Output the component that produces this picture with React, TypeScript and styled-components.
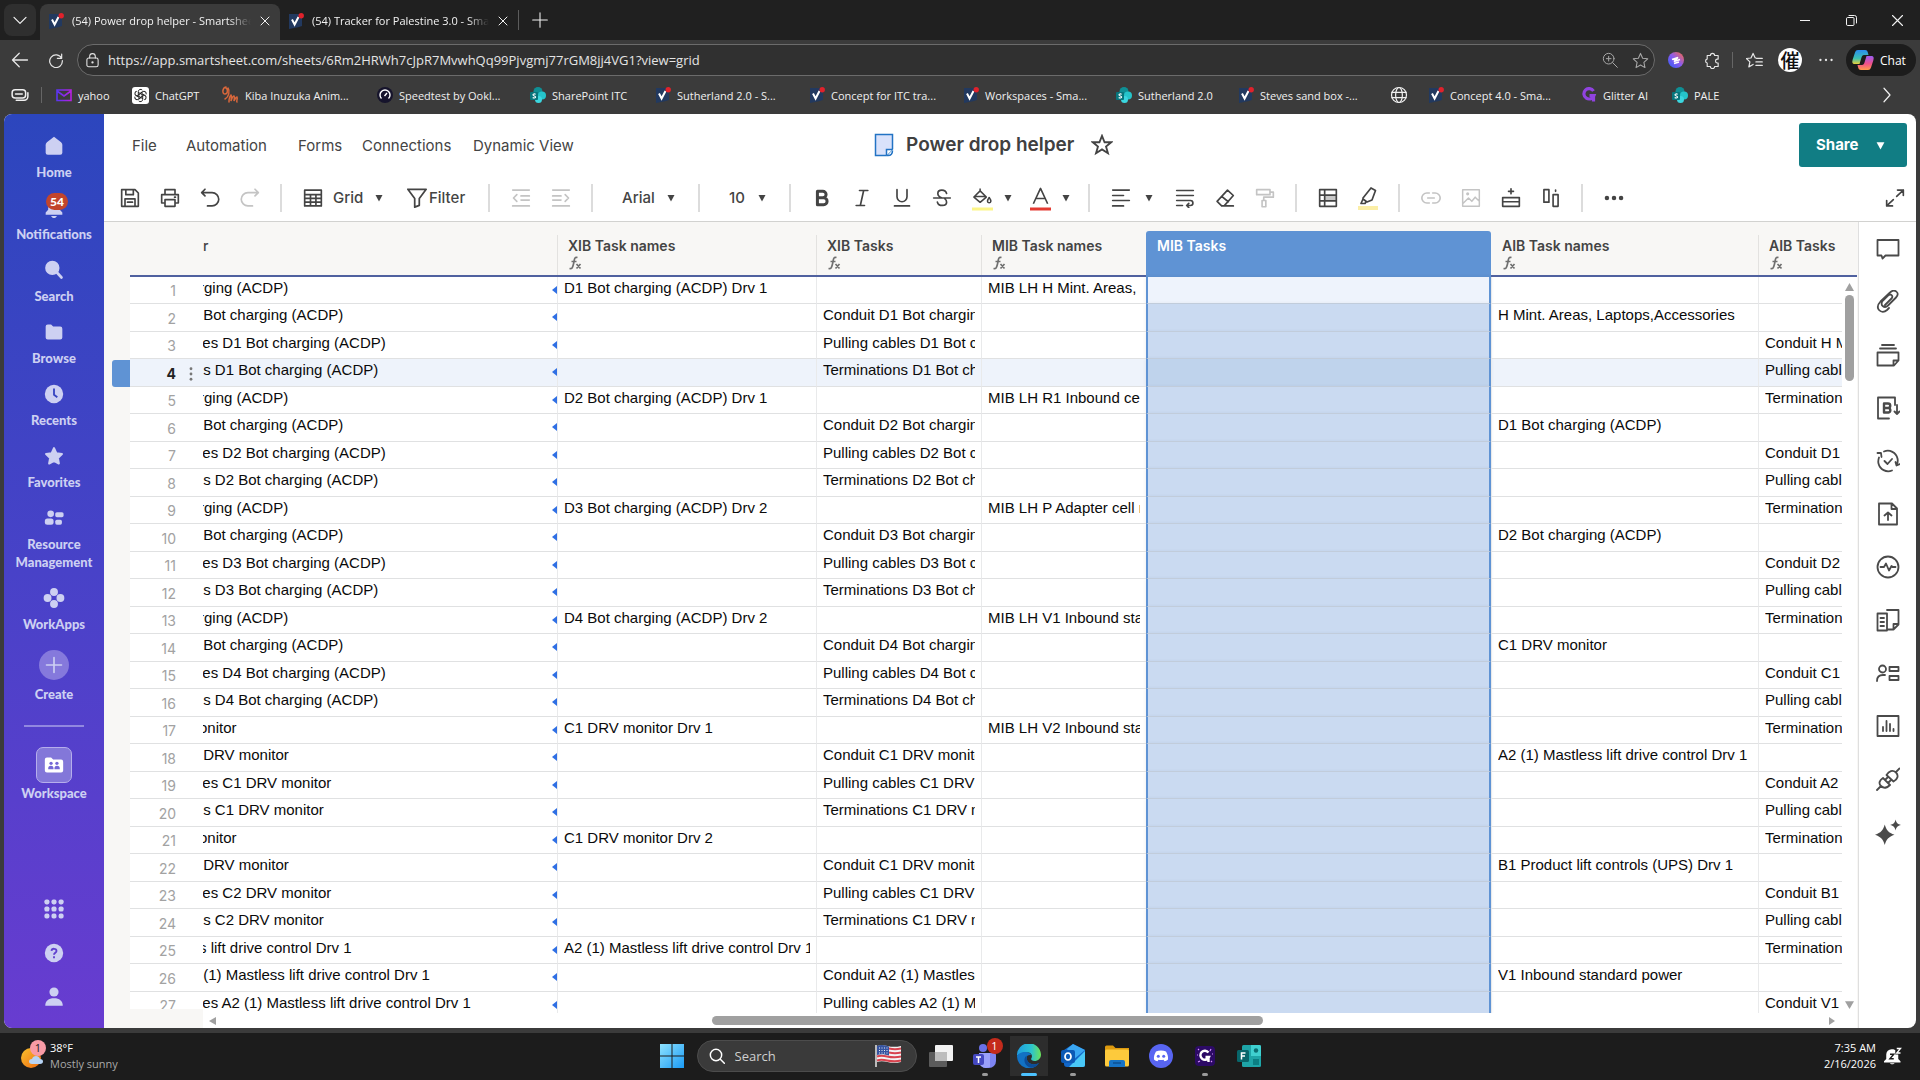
import React from "react";
import styled, { createGlobalStyle, css } from "styled-components";

const ui = `"Open Sans", "Noto Sans", sans-serif`;
const inter = `Inter, "Liberation Sans", sans-serif`;
const arial = `"Liberation Sans", Arial, sans-serif`;

const Global = createGlobalStyle`
  * { box-sizing: border-box; }
  body { margin: 0; background: #3b3b3b; overflow: hidden; }
  button, input, select { font: inherit; color: inherit; border: 0; background: none; padding: 0; margin: 0; outline: 0; }
  a { color: inherit; text-decoration: none; }
  svg { display: block; flex: none; }
`;

/* ---------- icons ---------- */

type IconProps = { size?: number; w?: number; children: React.ReactNode; color?: string; box?: string };

const Line = ({ size = 20, w = 2, color = "currentColor", box = "0 0 24 24", children }: IconProps) => (
  <svg width={size} height={size} viewBox={box} fill="none" stroke={color} strokeWidth={w} strokeLinejoin="round" strokeLinecap="round" aria-hidden="true">
    {children}
  </svg>
);

const Solid = ({ size = 20, color = "currentColor", box = "0 0 24 24", children }: IconProps) => (
  <svg width={size} height={size} viewBox={box} fill={color} aria-hidden="true">
    {children}
  </svg>
);

const Caret = ({ size = 8 }: { size?: number }) => (
  <Solid size={size} box="0 0 8 8"><path d="M0.5 1h7L4 7.5z" /></Solid>
);

const SmartIcon = () => (
  <svg width="16" height="16" viewBox="0 0 16 16" aria-hidden="true">
    <path d="M1 1h13v12l-4 1.2L1 16z" fill="#22395f" />
    <path d="M4 6.5l2.6 5L10.500 4" fill="none" stroke="#fff" strokeWidth="2" />
    <circle cx="13.200" cy="2.800" r="2.700" fill="#e0222b" />
  </svg>
);

const SharePointIcon = () => (
  <svg width="16" height="16" viewBox="0 0 16 16" aria-hidden="true">
    <circle cx="8" cy="4.500" r="4.500" fill="#0f8f95" />
    <circle cx="12" cy="8.500" r="4" fill="#25c4ca" />
    <circle cx="8.500" cy="12.500" r="3.500" fill="#3bd6df" />
    <rect x="0" y="5" width="8" height="8" rx="1" fill="#07757c" />
    <path d="M5.600 7.300C4.800 6.600 2.800 6.800 3 8s2.600.8 2.600 2-2 1.300-2.900.5" fill="none" stroke="#fff" strokeWidth="1.100" />
  </svg>
);

const YahooIcon = () => (
  <svg width="16" height="16" viewBox="0 0 16 16" fill="none" strokeWidth="1.600" aria-hidden="true">
    <defs><linearGradient id="yh" x1="0" x2="1"><stop stopColor="#5a35f0" /><stop offset="1" stopColor="#b620e0" /></linearGradient></defs>
    <path d="M1 3h14v10.500H1zM1 4l7 5 7-5" stroke="url(#yh)" />
  </svg>
);

const GptIcon = () => (
  <svg width="17" height="17" viewBox="0 0 17 17" aria-hidden="true">
    <rect width="17" height="17" rx="3" fill="#fff" />
    <g fill="none" stroke="#222" strokeWidth="1">
      {[0, 60, 120, 180, 240, 300].map((a) => (
        <path key={a} transform={`rotate(${a} 8.5 8.500)`} d="M6.300 7.200V4.600a2.300 2.300 0 0 1 4-1.500M6.300 5.400l4.400 2.400" />
      ))}
    </g>
  </svg>
);

const KibaIcon = () => (
  <svg width="18" height="18" viewBox="0 0 18 18" fill="none" stroke="#d9673b" strokeWidth="1.500" strokeLinecap="round" aria-hidden="true">
    <path d="M5 1C1 2 1 8 4 8s3-5 1-6M7 2c2 3 1 9-3 11M8 16c0-3 1-6 2-7 1 1 0 5 0 6 1-3 2-5 3-5 1 1 0 4 0 5 1-2 2-4 3-4 1 2-1 4 0 5" />
  </svg>
);

const SpeedIcon = () => (
  <svg width="16" height="16" viewBox="0 0 16 16" aria-hidden="true">
    <circle cx="8" cy="8" r="8" fill="#16142c" />
    <path d="M4.500 11.500a5 5 0 1 1 7 0M7.500 9l2.500-3" fill="none" stroke="#fff" strokeWidth="1.400" />
  </svg>
);

const GlobeIcon = () => (
  <Line size={18} w={1.6}><circle cx="12" cy="12" r="10" /><ellipse cx="12" cy="12" rx="4.500" ry="10" /><path d="M2.500 8.500h19M2.500 15.500h19" /></Line>
);

const GlitterIcon = () => (
  <svg width="16" height="16" viewBox="0 0 16 16" fill="none" aria-hidden="true">
    <path d="M12.500 4A5.200 5.200 0 1 0 13 8.500H8.500M12.500 8v6.500" stroke="#9043e0" strokeWidth="3.200" />
  </svg>
);

/* ---------- browser frame ---------- */

const Screen = styled.div`
  display: flex;
  flex-direction: column;
  height: 100vh;
  background: #3b3b3b;
  font-family: ${ui};
`;

const TabStrip = styled.header`
  display: flex;
  align-items: stretch;
  flex: none;
  height: 40px;
  padding: 4px 0 0 4px;
  background: #202020;
  color: #f2f2f2;
`;

const TabMenu = styled.button`
  width: 32px;
  height: 32px;
  margin-right: 4px;
  border-radius: 8px;
  background: #2f2f2f;
  display: grid;
  place-items: center;
`;

const Tab = styled.div<{ $active?: boolean }>`
  display: flex;
  align-items: center;
  width: ${(p) => (p.$active ? 240 : 238)}px;
  padding: 0 9px 3px 8px;
  gap: 8px;
  border-radius: 8px 8px 0 0;
  background: ${(p) => (p.$active ? "#3b3b3b" : "transparent")};
`;

const TabTitle = styled.button`
  flex: 1;
  min-width: 0;
  overflow: hidden;
  white-space: nowrap;
  text-align: left;
  font-size: 11px;
  mask-image: linear-gradient(90deg, #000 88%, transparent);
`;

const StripRule = styled.i`
  width: 1px;
  height: 20px;
  margin: 6px 0;
  background: #5c5c5c;
`;

const NewTab = styled.button`
  width: 42px;
  display: grid;
  place-items: center;
  height: 32px;
`;

const WindowButtons = styled.div`
  display: flex;
  margin-left: auto;
  height: 32px;
`;

const WindowButton = styled.button`
  width: 46px;
  display: grid;
  place-items: center;
`;

const AddressRow = styled.div`
  display: flex;
  align-items: center;
  flex: none;
  height: 40px;
  padding: 0 4px 0 2px;
  color: #e6e6e6;
`;

const NavButton = styled.button<{ $w?: number }>`
  width: ${(p) => p.$w ?? 36}px;
  height: 32px;
  flex: none;
  display: grid;
  place-items: center;
`;

const AddressBox = styled.label`
  display: flex;
  align-items: center;
  flex: 1;
  height: 32px;
  margin: 0 3px;
  padding: 0 2px 0 7px;
  gap: 8px;
  border: 1px solid #6b6b6b;
  border-radius: 16px;
  background: #303030;
`;

const AddressInput = styled.input`
  flex: 1;
  font-size: 13px;
  color: #e4e4e4;
`;

const Avatar = styled.span`
  display: grid;
  place-items: center;
  width: 24px;
  height: 24px;
  border-radius: 50%;
  background: #fff;
  color: #111;
  font: 500 19px/24px "Noto Sans CJK JP", sans-serif;
  overflow: hidden;
`;

const ThinRule = styled.i`
  width: 1px;
  height: 16px;
  margin: 0 1px 0 2px;
  background: #666;
`;

const ChatButton = styled.button`
  display: flex;
  align-items: center;
  gap: 6px;
  height: 32px;
  width: 70px;
  padding-left: 6px;
  border-radius: 16px;
  background: #1c1c1c;
  color: #fff;
  font-size: 12px;
`;

const Bookmarks = styled.nav`
  display: flex;
  align-items: center;
  flex: none;
  height: 34px;
  padding: 0 24px 4px 11px;
  color: #f0f0f0;
  font-size: 11px;
`;

const Bookmark = styled.a<{ $w: number }>`
  display: flex;
  align-items: center;
  gap: 6px;
  width: ${(p) => p.$w}px;
  white-space: nowrap;
`;

const BookmarkRule = styled(ThinRule)`
  margin: 0 14px 0 12px;
`;

const Push = styled.span`
  margin-left: auto;
`;

const bookmarks: [string, React.ReactNode, number][] = [
  ["yahoo", <YahooIcon />, 76],
  ["ChatGPT", <GptIcon />, 89],
  ["Kiba Inuzuka Anim...", <KibaIcon />, 156],
  ["Speedtest by Ookl...", <SpeedIcon />, 153],
  ["SharePoint ITC", <SharePointIcon />, 125],
  ["Sutherland 2.0 - S...", <SmartIcon />, 154],
  ["Concept for ITC tra...", <SmartIcon />, 154],
  ["Workspaces - Sma...", <SmartIcon />, 153],
  ["Sutherland 2.0", <SharePointIcon />, 122],
  ["Steves sand box -...", <SmartIcon />, 152],
  ["", <GlobeIcon />, 38],
  ["Concept 4.0 - Sma...", <SmartIcon />, 153],
  ["Glitter AI", <GlitterIcon />, 91],
  ["PALE", <SharePointIcon />, 60],
];

const Browser = () => (
  <>
    <TabStrip>
      <TabMenu aria-label="Tab actions"><Line size={16} w={1.8}><path d="M3 8l9 9 9-9" /></Line></TabMenu>
      <Tab $active>
        <SmartIcon />
        <TabTitle>(54) Power drop helper - Smartsheet</TabTitle>
        <Line size={12}><path d="M4 4l16 16M20 4L4 20" /></Line>
      </Tab>
      <Tab>
        <SmartIcon />
        <TabTitle>(54) Tracker for Palestine 3.0 - Smartsheet</TabTitle>
        <Line size={12}><path d="M4 4l16 16M20 4L4 20" /></Line>
      </Tab>
      <StripRule />
      <NewTab aria-label="New tab"><Line size={16} w={1.6}><path d="M12 1v22M1 12h22" /></Line></NewTab>
      <WindowButtons>
        <WindowButton aria-label="Minimize"><Line size={10} w={1} box="0 0 10 10"><path d="M0 5.500h10" /></Line></WindowButton>
        <WindowButton aria-label="Restore"><Line size={11} w={1} box="0 0 11 11"><path d="M.5 3.500a1 1 0 0 1 1-1h5.500a1 1 0 0 1 1 1V9.500a1 1 0 0 1-1 1H1.500a1 1 0 0 1-1-1zM3 .5h5.500a2 2 0 0 1 2 2v5.500" /></Line></WindowButton>
        <WindowButton aria-label="Close"><Line size={11} w={1.1} box="0 0 11 11"><path d="M.5.5l10 10M10.500.5l-10 10" /></Line></WindowButton>
      </WindowButtons>
    </TabStrip>
    <AddressRow>
      <NavButton aria-label="Back"><Line size={18} w={1.7}><path d="M22 12H2M11 3l-9 9 9 9" /></Line></NavButton>
      <NavButton aria-label="Refresh"><Line size={16} w={1.8}><path d="M20.500 9.500A9.500 9.500 0 1 0 21.500 13M20.500 3v6.500H14" /></Line></NavButton>
      <AddressBox>
        <Line size={15} w={1.7}><rect x="3" y="8" width="18" height="14" rx="3" /><path d="M7.500 8V5.500a4.500 4.500 0 0 1 9 0V8" /><circle cx="12" cy="15" r="1" /></Line>
        <AddressInput aria-label="Address" defaultValue="https://app.smartsheet.com/sheets/6Rm2HRWh7cJpR7MvwhQq99Pjvgmj77rGM8jj4VG1?view=grid" />
        <NavButton $w={20} aria-label="Zoom"><Line size={16} w={1.5} color="#a8a8a8"><circle cx="10" cy="10" r="8" /><path d="M16 16l7 7M10 6.500v7M6.500 10h7" /></Line></NavButton>
        <NavButton $w={24} aria-label="Add favorite"><Line size={17} w={1.5} color="#a8a8a8"><path d="M12 2l3 6.800 7.200.8-5.400 5 1.500 7.400L12 18.300 5.700 22l1.500-7.400-5.400-5L9 8.800z" /></Line></NavButton>
      </AddressBox>
      <NavButton aria-label="Extension">
        <svg width="16" height="16" viewBox="0 0 16 16" aria-hidden="true">
          <defs><linearGradient id="ball" x1="0" y1="1" x2="1" y2="0"><stop stopColor="#2f5cf6" /><stop offset=".5" stopColor="#8a5bf0" /><stop offset="1" stopColor="#ff6a3d" /></linearGradient></defs>
          <circle cx="8" cy="8" r="8" fill="url(#ball)" />
          <path d="M4 7.500l6-2-4 4 6-2M6 11.500l5-1.500" stroke="#fff" strokeWidth="1.600" fill="none" />
        </svg>
      </NavButton>
      <NavButton aria-label="Extensions"><Line size={17} w={1.6}><path d="M9 5a3 3 0 0 1 6 0h5v5h-1.500a2.800 2.800 0 0 0 0 5.500H20v5h-5a3 3 0 0 1-6 0H4.500v-5a2.800 2.800 0 0 1 0-5.500V5z" /></Line></NavButton>
      <ThinRule />
      <NavButton $w={40} aria-label="Favorites"><Line size={17} w={1.7}><path d="M14 8.500h-1L10 2 7 8.500l-6.500.7 5 4.800L4 21l6-3.500M15 9h8M14 14h9M14 19h9" /></Line></NavButton>
      <NavButton $w={32} aria-label="Profile"><Avatar>催</Avatar></NavButton>
      <NavButton $w={40} aria-label="Settings"><Solid size={14}><circle cx="2.500" cy="12" r="2" /><circle cx="12" cy="12" r="2" /><circle cx="21.500" cy="12" r="2" /></Solid></NavButton>
      <ChatButton>
        <svg width="22" height="22" viewBox="0 0 22 22" aria-hidden="true">
          <defs>
            <linearGradient id="cpa" x1="0" y1="0" x2="0" y2="1"><stop stopColor="#2a8df0" /><stop offset=".6" stopColor="#3cc0b0" /><stop offset="1" stopColor="#e8d03a" /></linearGradient>
            <linearGradient id="cpb" x1="0" y1="0" x2="0" y2="1"><stop stopColor="#9a5cf2" /><stop offset=".55" stopColor="#f0508a" /><stop offset="1" stopColor="#ff9a4a" /></linearGradient>
          </defs>
          <path d="M6 1h7c2 0 2.500 1 3 3l.5 2H12c-1.500 0-2 1-2.500 2.500L7.500 15H3c-3 0-3-2-2.300-4.500L3 3.500C3.600 1.800 4.500 1 6 1z" fill="url(#cpa)" />
          <path d="M16 21H9c-2 0-2.500-1-3-3l-.5-2H10c1.500 0 2-1 2.500-2.500L14.500 7H19c3 0 3 2 2.300 4.500L19 18.500c-.6 1.700-1.500 2.500-3 2.500z" fill="url(#cpb)" />
        </svg>
        Chat
      </ChatButton>
    </AddressRow>
    <Bookmarks>
      <Line size={18} w={2}><rect x="1.500" y="5" width="18" height="11" rx="4" /><path d="M6 10.500h9M22.500 9v5a5 5 0 0 1-5 5H7" /></Line>
      <BookmarkRule />
      {bookmarks.map(([t, icon, w], i) => (
        <Bookmark key={i} href="#" $w={w} aria-label={t || "Site"}>{icon}{t}</Bookmark>
      ))}
      <Push><Line size={18} w={1.6}><path d="M8 3l8 9-8 9" /></Line></Push>
    </Bookmarks>
  </>
);

/* ---------- side navigation ---------- */

const Side = styled.nav`
  display: flex;
  flex-direction: column;
  align-items: center;
  flex: none;
  gap: 15px;
  width: 100px;
  padding: 20px 0 9px;
  background: linear-gradient(#2c46bd, #4842c8 50%, #683cd0);
  color: #cdd0f2;
`;

const SideItem = styled.button<{ $gap?: number; $top?: number }>`
  display: flex;
  flex-direction: column;
  align-items: center;
  flex: none;
  gap: ${(p) => p.$gap ?? 5}px;
  margin-top: ${(p) => p.$top ?? 0}px;
  width: 100%;
  font: 900 13px/18px Lato, sans-serif;
`;

const SideIcon = styled.span`
  position: relative;
  display: grid;
  place-items: center;
  width: 24px;
  height: 24px;
`;

const Count = styled.b`
  position: absolute;
  left: 4px;
  top: -3px;
  width: 22px;
  height: 17px;
  border-radius: 9px;
  background: #c2452d;
  color: #fff;
  font: 900 12px/17px Lato, sans-serif;
`;

const Plus = styled.span`
  display: grid;
  place-items: center;
  width: 30px;
  height: 30px;
  border-radius: 50%;
  background: #8579dc;
`;

const SideRule = styled.hr`
  width: 60px;
  height: 2px;
  flex: none;
  margin: 7px 0 0;
  border: 0;
  background: #9188e0;
`;

const SpaceBox = styled.span`
  display: grid;
  place-items: center;
  width: 36px;
  height: 36px;
  border: 1px solid #b6aeec;
  border-radius: 7px;
  background: #8377d9;
`;

const SideFoot = styled.div`
  display: grid;
  grid-auto-rows: 44px;
  margin-top: auto;
`;

const SideFootButton = styled.button`
  display: grid;
  place-items: center;
  width: 44px;
`;

const SideNav = () => (
  <Side>
    <SideItem><SideIcon><Solid size={20}><path d="M12 1l8.500 6.500c1 1 1.500 2 1.500 3.500v9a2.500 2.500 0 0 1-2.500 2.500h-15A2.500 2.500 0 0 1 2 20v-9c0-1.500.5-2.500 1.500-3.500z" /></Solid></SideIcon>Home</SideItem>
    <SideItem><SideIcon><Solid size={20}><path d="M12 1a7 7 0 0 0-7 7v6l-3 3.500V20h20v-2.500L19 14V8a7 7 0 0 0-7-7zM8.500 21.500h7c-.5 1.500-2 2.500-3.500 2.500s-3-1-3.500-2.500z" /></Solid><Count>54</Count></SideIcon>Notifications</SideItem>
    <SideItem><SideIcon><Line size={20} w={3.2}><circle cx="10" cy="9.500" r="7" fill="currentColor" /><path d="M15.500 15l5.500 6" /></Line></SideIcon>Search</SideItem>
    <SideItem><SideIcon><Solid size={20}><path d="M2 5.500A2.500 2.500 0 0 1 4.500 3h4L11 5.500h8.500A2.500 2.500 0 0 1 22 8v10.500a2.500 2.500 0 0 1-2.500 2.500h-15A2.500 2.500 0 0 1 2 18.500z" /></Solid></SideIcon>Browse</SideItem>
    <SideItem><SideIcon><Solid size={20}><circle cx="12" cy="12" r="11" /><path d="M12 5.500V13l4 3" stroke="#3744c1" strokeWidth="2.200" fill="none" /></Solid></SideIcon>Recents</SideItem>
    <SideItem><SideIcon><Line size={20} w={2.5}><path fill="currentColor" d="M12 2.500l2.900 6.300 6.600.8-4.900 4.700 1.200 6.700L12 17.800 6.200 21l1.200-6.700L2.500 9.600l6.600-.8z" /></Line></SideIcon>Favorites</SideItem>
    <SideItem><SideIcon><Solid size={20}><circle cx="8" cy="7" r="4" /><rect x="1" y="12.500" width="10.500" height="7.500" rx="3" /><rect x="13.500" y="5" width="10" height="6" rx="2" /><rect x="13.500" y="14" width="8" height="6" rx="2" /></Solid></SideIcon>Resource<br />Management</SideItem>
    <SideItem><SideIcon><Solid size={22}><circle cx="12" cy="5.500" r="4.300" /><circle cx="12" cy="18.500" r="4.300" /><circle cx="5" cy="12" r="4.300" /><circle cx="19" cy="12" r="4.300" /></Solid></SideIcon>WorkApps</SideItem>
    <SideItem $top={2}><Plus><Line size={18} w={2.2}><path d="M12 2v20M2 12h20" /></Line></Plus>Create</SideItem>
    <SideRule />
    <SideItem $gap={1} $top={5}>
      <SpaceBox>
        <Solid size={20} color="#fff">
          <path d="M1 5.500A2.500 2.500 0 0 1 3.500 3h5L11 5.500h9.500A2.500 2.500 0 0 1 23 8v10.500a2.500 2.500 0 0 1-2.500 2.500h-17A2.500 2.500 0 0 1 1 18.500z" />
          <g fill="#7468d6"><circle cx="8.500" cy="10" r="2" /><circle cx="15.500" cy="10" r="2" /><path d="M5 17c0-3 1-4 3.300-4s3.200 1 3.200 4zM12.500 17c0-3 1-4 3.200-4S19 14 19 17z" /></g>
        </Solid>
      </SpaceBox>
      Workspace
    </SideItem>
    <SideFoot>
      <SideFootButton aria-label="Apps"><Solid size={20}>{[3.5, 12, 20.5].map((x) => [3.5, 12, 20.5].map((y) => <rect key={`${x}-${y}`} x={x - 3} y={y - 3} width="6" height="6" rx="2.200" />))}</Solid></SideFootButton>
      <SideFootButton aria-label="Help"><Solid size={20}><circle cx="12" cy="12" r="11" /><path d="M9 9.500c.2-3.500 6-3.300 6 0 0 2-3 2.300-3 4.500M12 16v2.300" stroke="#6040ce" strokeWidth="2.200" fill="none" /></Solid></SideFootButton>
      <SideFootButton aria-label="Account"><Solid size={20}><circle cx="12" cy="6" r="5.500" /><path d="M1.500 22.500c0-6 4-9 10.500-9s10.500 3 10.500 9z" /></Solid></SideFootButton>
    </SideFoot>
  </Side>
);

/* ---------- sheet header and toolbar ---------- */

const Workspace = styled.main`
  display: flex;
  flex: 1;
  min-height: 0;
  margin: 0 4px 5px;
  overflow: hidden;
  border-radius: 8px;
  background: #fff;
`;

const Content = styled.section`
  display: flex;
  flex-direction: column;
  flex: 1;
  min-width: 0;
`;

const Header = styled.div`
  display: flex;
  align-items: center;
  flex: none;
  height: 62px;
  padding: 0 9px 0 28px;
  font-family: ${inter};
  color: #444;
`;

const MenuButton = styled.button<{ $w: number }>`
  width: ${(p) => p.$w}px;
  text-align: left;
  white-space: nowrap;
  font-size: 15px;
`;

const Space = styled.span<{ $grow: number }>`
  flex: ${(p) => p.$grow} 1 0;
`;

const Title = styled.h1`
  margin: 0 17px 0 12px;
  font: 600 19px/24px ${inter};
  color: #404040;
`;

const Share = styled.button`
  display: flex;
  align-items: center;
  justify-content: space-between;
  width: 108px;
  height: 44px;
  padding: 0 22px 0 17px;
  border-radius: 3px;
  background: #117d84;
  color: #fff;
  font: 700 15px/20px ${inter};
`;

const Toolbar = styled.div`
  display: flex;
  align-items: center;
  flex: none;
  height: 46px;
  padding: 0 1px 1px 6px;
  border-bottom: 1px solid #d2d2d0;
  color: #444;
  font: 500 15px/20px ${inter};
`;

const Tool = styled.button<{ $w?: number; $off?: boolean; $gap?: number }>`
  display: flex;
  align-items: center;
  gap: ${(p) => p.$gap ?? 0}px;
  width: ${(p) => p.$w ?? 40}px;
  height: 40px;
  padding-left: 10px;
  flex: none;
  color: ${(p) => (p.$off ? "#c4c4c4" : "inherit")};
`;

const Split = styled.i`
  flex: none;
  width: 2px;
  height: 28px;
  margin: 0 11px 0 10px;
  background: #dcdcdc;
`;

const Drop = styled.label<{ $w: number; $left: number }>`
  display: flex;
  align-items: center;
  justify-content: space-between;
  width: ${(p) => p.$w}px;
  padding: 0 13px 0 ${(p) => p.$left}px;
  select { appearance: none; width: 36px; }
  svg { pointer-events: none; }
`;

const DropDown = ({ w, left, label, value }: { w: number; left: number; label: string; value: string }) => (
  <Drop $w={w} $left={left}>
    <select aria-label={label} defaultValue={value}><option>{value}</option></select>
    <Caret />
  </Drop>
);

const SheetHeader = () => (
  <Header>
    <MenuButton $w={54}>File</MenuButton>
    <MenuButton $w={112}>Automation</MenuButton>
    <MenuButton $w={64}>Forms</MenuButton>
    <MenuButton $w={111}>Connections</MenuButton>
    <MenuButton $w={103}>Dynamic View</MenuButton>
    <Space $grow={10} />
    <svg width="20" height="24" viewBox="0 0 20 24" aria-hidden="true">
      <path d="M1.500 1.500h17V16l-6 6.500h-11z" fill="#d9e2fb" stroke="#2273c4" strokeWidth="1.500" />
      <path d="M18.500 16.500h-6v6" fill="#fff" stroke="#2273c4" strokeWidth="1.500" />
      <path d="M13 22.500h1c3 0 4.500-2 4.500-5" fill="none" stroke="#2273c4" strokeWidth="1.500" />
    </svg>
    <Title>Power drop helper</Title>
    <Line size={22} w={2}><path d="M12 2l2.800 7H22l-5.600 4.600L18.500 21 12 16.800 5.500 21l2.100-7.400L2 9h7.200z" strokeLinejoin="miter" /></Line>
    <Space $grow={23} />
    <Share>Share<Caret size={9} /></Share>
  </Header>
);

const SheetToolbar = () => (
  <Toolbar>
    <Tool aria-label="Save"><Line><path d="M2 2h16l4 4v16H2zM7 2v6h9V2M6 22v-9h12v9M9 17h6" /></Line></Tool>
    <Tool aria-label="Print"><Line><path d="M6 8V2h12v6M6 18H2V8h20v10h-4M6 14h12v8H6zM17.500 11h1" /></Line></Tool>
    <Tool aria-label="Undo"><Line><path d="M6 1.500L2 5.500l4 4M2 5.500h12.500a7.500 7.500 0 0 1 0 16H9" /></Line></Tool>
    <Tool aria-label="Redo" $off><Line><path d="M18 1.500l4 4-4 4M22 5.500H9.500a7.500 7.500 0 0 0 0 16H15" /></Line></Tool>
    <Split />
    <Tool aria-label="View"><Line><path d="M2 2.500h20v19H2zM2 8h20M2 12.500h20M2 17h20M9 8v13.500M15.500 8v13.500" /></Line></Tool>
    <DropDown w={63} left={0} label="View" value="Grid" />
    <Tool $w={82} $gap={1}><Line w={1.9} size={22}><path d="M2 2.500h20l-7.500 10V20L9.500 22v-9.500z" /></Line>Filter</Tool>
    <Split />
    <Tool aria-label="Outdent" $off><Line><path d="M2 2.500h20M2 21.500h20M12 9.500h10M12 14.500h10M7 8l-4 4 4 4" /></Line></Tool>
    <Tool aria-label="Indent" $off><Line><path d="M2 2.500h20M2 21.500h20M2 9.500h10M2 14.500h10M17 8l4 4-4 4" /></Line></Tool>
    <Split />
    <DropDown w={84} left={18} label="Font" value="Arial" />
    <Split />
    <DropDown w={68} left={18} label="Font size" value="10" />
    <Split />
    <Tool aria-label="Bold"><Line w={3.6}><path d="M6.500 4h6.500a3.900 3.900 0 0 1 0 7.800H6.500zM6.500 11.800h7.500a4.100 4.100 0 0 1 0 8.200H6.500z" /></Line></Tool>
    <Tool aria-label="Italic"><Line><path d="M9 3h10M5 21h10M14 3l-4 18" /></Line></Tool>
    <Tool aria-label="Underline"><Line><path d="M6 2v8.500a6 6 0 0 0 12 0V2M3 21.500h18" /></Line></Tool>
    <Tool aria-label="Strikethrough"><Line><path d="M17.500 6.500C16 1 7 1.500 7 6.500c0 3 2.500 4.500 5 5.500M6.500 17C8 22.500 17.500 22 17.500 17c0-2-.8-3.200-2-4M2 12h20" /></Line></Tool>
    <Tool aria-label="Fill colour" $w={58} $gap={11}>
      <svg width="21" height="26" viewBox="0 0 22 26" fill="none" stroke="currentColor" strokeWidth="1.600" strokeLinejoin="round" aria-hidden="true">
        <path d="M8.500 5.500L15 12l-6.500 5.500L2 12zM8.500 3v4M3 11.500h11" /><path d="M18 12.500c3 4 1.500 5.500 0 5.500s-3-1.500 0-5.500z" />
        <path d="M0 24.500h22" stroke="#fcf587" strokeWidth="3" />
      </svg>
      <Caret />
    </Tool>
    <Tool aria-label="Text colour" $w={58} $gap={11}>
      <svg width="21" height="26" viewBox="0 0 22 26" fill="none" stroke="currentColor" strokeWidth="1.700" strokeLinejoin="round" aria-hidden="true">
        <path d="M3.500 19L11 3l7.500 16M6.500 13.500h9" />
        <path d="M0 24.500h22" stroke="#e43a32" strokeWidth="3" />
      </svg>
      <Caret />
    </Tool>
    <Split />
    <Tool aria-label="Align" $w={64} $gap={14}><Line><path d="M2 2.500h20M2 9h13M2 15h20M2 21.500h13" /></Line><Caret /></Tool>
    <Tool aria-label="Wrap text"><Line><path d="M2 3h20M2 9h20M2 15h16.500a3 3 0 0 1 0 6H14M16.500 18.500L14 21l2.500 2.500M2 21h7" /></Line></Tool>
    <Tool aria-label="Clear format"><Line><path d="M8 21.500l-5.500-5.500L15 2.500l7 6.500L11 21.500zM8 10l8 6.500M8 21.500h14" /></Line></Tool>
    <Tool aria-label="Format painter" $off><Line><path d="M2 2h16v6H2zM18 5h4v6H10.500v4M8.500 15h4.500v7.500H8.500z" /></Line></Tool>
    <Split />
    <Tool aria-label="Conditional formatting"><Line><path d="M8 9h14v6H8z" fill="#c8c8c8" stroke="none" /><path d="M2 2h20v20H2zM2 8.500h20M2 15.500h20M8 2v20" /></Line></Tool>
    <Tool aria-label="Highlight">
      <svg width="20" height="26" viewBox="0 0 20 26" fill="none" stroke="currentColor" strokeWidth="1.700" strokeLinejoin="round" aria-hidden="true">
        <path d="M5 13L13 3l4.500 2.500L14 15l-5 2-4-3zM5 14l-2 4.500h4L8.500 16" /><path d="M0 23h20" stroke="#fbeea6" strokeWidth="4" />
      </svg>
    </Tool>
    <Split />
    <Tool aria-label="Link" $off><Line><path d="M10 6H7a6 6 0 0 0 0 12h3M14 6h3a6 6 0 0 1 0 12h-3M8 12h8" /></Line></Tool>
    <Tool aria-label="Image" $off><Line w={1.8}><path d="M2 2h20v20H2zM2 19l7-7 4 4 4-5 5 5" /><circle cx="8" cy="7" r="1" /></Line></Tool>
    <Tool aria-label="Insert row"><Line><path d="M2 11.500h20v10.500H2zM2 16.500h20M12 1v6M9 4h6" /></Line></Tool>
    <Tool aria-label="Insert column"><Line><path d="M3.500 2h6v15h-6zM14.500 8h6v14h-6zM17.500 2.500v1.500" /></Line></Tool>
    <Split />
    <Tool aria-label="More"><Solid><circle cx="3.500" cy="12" r="2.700" /><circle cx="12" cy="12" r="2.700" /><circle cx="20.500" cy="12" r="2.700" /></Solid></Tool>
    <Push><Tool aria-label="Expand"><Line><path d="M14 10l8-7.500M15 2.500h7V9M10 14l-8 7.500M9 21.500H2V15" /></Line></Tool></Push>
  </Toolbar>
);

/* ---------- grid ---------- */

const Work = styled.div`
  display: flex;
  flex: 1;
  min-height: 0;
`;

const Sheet = styled.div`
  position: relative;
  display: flex;
  flex-direction: column;
  flex: 1;
  min-width: 0;
  padding-right: 1px;
  background: #f8f7f5;
`;

const Port = styled.div`
  flex: 1;
  min-height: 0;
  overflow: hidden;
  padding-top: 9px;
`;

const Table = styled.table`
  width: 100%;
  table-layout: fixed;
  border-collapse: separate;
  border-spacing: 0;
  font: 15px/18px ${arial};
  color: #0a0a0a;
`;

const Head = styled.th<{ $on?: boolean; $bare?: boolean }>`
  height: 46px;
  padding: 4px 0 0;
  vertical-align: top;
  text-align: left;
  white-space: nowrap;
  overflow: hidden;
  font: 600 14px/20px ${inter};
  color: #444;
  border-bottom: 2px solid ${(p) => (p.$bare ? "transparent" : "#50619f")};
  ${(p) => p.$on && css`
    color: #fff;
    background: #5f93d4;
    border-color: #5f93d4;
    border-radius: 3px 3px 0 0;
  `}
`;

const HeadBox = styled.div<{ $line?: boolean }>`
  height: 40px;
  padding: 1px 0 0 10px;
  border-left: 1px solid ${(p) => (p.$line ? "#e3e2e0" : "transparent")};
`;

const HeadTail = styled(HeadBox)`
  padding-left: 0;
  border: 0;
  font-weight: 500;
`;

const Fx = () => (
  <svg width="16" height="14" viewBox="0 0 16 14" fill="none" stroke="#707070" strokeWidth="1.700" aria-hidden="true">
    <path d="M9.500 1.500C6 .5 6.500 4 5.500 8S4 13 1.500 12.500M3.500 5.500h5M8.500 8l4 4.500M12.500 8l-4 4.500" />
  </svg>
);

const Row = styled.tr<{ $on?: boolean }>`
  height: 27px;
  background: ${(p) => (p.$on ? "#eef3fb" : "#fff")};
  &:nth-child(even) { height: 28px; }
`;

const line = css`border-bottom: 1px solid #e0e1e2;`;

const Gutter = styled.td<{ $on?: boolean }>`
  padding: 0 0 0 8px;
  background: #f8f7f5;
  i { display: block; height: 27px; border-radius: 3px 0 0 3px; background: ${(p) => (p.$on ? "#5f93d4" : "transparent")}; }
`;

const Num = styled.th<{ $on?: boolean }>`
  ${line}
  position: relative;
  padding: 2px 27px 0 0;
  text-align: right;
  font: ${(p) => (p.$on ? 700 : 400)} 14px/18px ${inter};
  color: ${(p) => (p.$on ? "#222" : "#a2a2a2")};
  svg { position: absolute; right: 5px; top: 8px; }
`;

const Cell = styled.td<{ $bare?: boolean }>`
  ${line}
  position: relative;
  padding: 2px ${(p) => (p.$bare ? 0 : 6)}px 0 ${(p) => (p.$bare ? 0 : 6)}px;
  vertical-align: top;
  ${(p) => !p.$bare && css`border-left: 1px solid #e9eaeb;`}
`;

const Clip = styled.div`
  overflow: hidden;
  white-space: nowrap;
`;

const Scrolled = styled.span`
  margin-left: -4px;
  white-space: pre;
`;

const LinkMark = styled.svg`
  position: absolute;
  right: 0;
  top: 9px;
`;

const Picked = styled.td<{ $tone: string }>`
  border-bottom: 1px solid #c8d3e3;
  border-left: 2px solid #5f93d4;
  border-right: 2px solid #5f93d4;
  background: ${(p) => p.$tone};
  box-shadow: 0 0 4px #00000014;
`;

const BottomBar = styled.div`
  display: flex;
  align-items: center;
  flex: none;
  height: 15px;
  margin-left: 99px;
  padding: 0 21px 0 6px;
  background: #fff;
  color: #a0a0a0;
`;

const Corner = styled.div`
  position: absolute;
  left: 0;
  bottom: 0;
  width: 99px;
  height: 19px;
  background: #f8f7f5;
`;

const ThumbX = styled.div`
  flex: 551 1 0;
  height: 9px;
  border-radius: 5px;
  background: #a0a0a0;
`;

const TrackY = styled.div`
  position: absolute;
  right: 1px;
  top: 55px;
  bottom: 0;
  width: 15px;
  padding: 6px 0 19px;
  display: flex;
  flex-direction: column;
  align-items: center;
  justify-content: space-between;
  background: #fff;
  color: #a0a0a0;
`;

const ThumbY = styled.div`
  width: 9px;
  height: 86px;
  margin-top: 3px;
  margin-bottom: auto;
  border-radius: 5px;
  background: #a0a0a0;
`;

const bot = (d: string) => ["rging (ACDP)", " Bot charging (ACDP)", `les ${d} Bot charging (ACDP)`, ` s ${d} Bot charging (ACDP)`];
const drv = (c: string) => ["onitor", " DRV monitor", `les ${c} DRV monitor`, ` s ${c} DRV monitor`];
const first = [
  ...bot("D1"), ...bot("D2"), ...bot("D3"), ...bot("D4"), ...drv("C1"), ...drv("C2"),
  "s lift drive control Drv 1", " (1) Mastless lift drive control Drv 1", "les A2 (1) Mastless lift drive control Drv 1",
];
const xib = ["D1 Bot charging (ACDP) Drv 1", "D2 Bot charging (ACDP) Drv 1", "D3 Bot charging (ACDP) Drv 2", "D4 Bot charging (ACDP) Drv 2", "C1 DRV monitor Drv 1", "C1 DRV monitor Drv 2", "A2 (1) Mastless lift drive control Drv 1"];
const mib = ["MIB LH H Mint. Areas, Laptops", "MIB LH R1 Inbound cell", "MIB LH P Adapter cell racks", "MIB LH V1 Inbound standard", "MIB LH V2 Inbound standard", "", ""];
const aib = ["H Mint. Areas, Laptops,Accessories", "D1 Bot charging (ACDP)", "D2 Bot charging (ACDP)", "C1 DRV monitor", "A2 (1) Mastless lift drive control Drv 1", "B1 Product lift controls (UPS) Drv 1", "V1 Inbound standard power"];
const steps = ["", "Conduit ", "Pulling cables ", "Terminations "];

const rows = first.map((text, i) => {
  const g = Math.floor(i / 4);
  const k = i % 4;
  const a = Math.floor((i - 1) / 4);
  const ak = (i + 3) % 4;
  return {
    n: i + 1,
    first: text,
    xibName: k === 0 ? xib[g] : "",
    xibTask: k ? steps[k] + xib[g] : "",
    mibName: k === 0 ? mib[g] : "",
    aibName: ak === 0 ? aib[a] : "",
    aibTask: ak && a >= 0 ? steps[ak] + aib[a] : "",
  };
});

const tone = (n: number) => (n === 1 ? "#eef3fc" : n === 4 ? "#bfd3ec" : "#cadaf1");

const heads: { t: string; fx: boolean; on?: boolean }[] = [
  { t: "XIB Task names", fx: true },
  { t: "XIB Tasks", fx: true },
  { t: "MIB Task names", fx: true },
  { t: "MIB Tasks", fx: false, on: true },
  { t: "AIB Task names", fx: true },
  { t: "AIB Tasks", fx: true },
];

const Grid = () => (
  <Sheet>
    <Port>
      <Table>
        <colgroup>
          {[26, 73, 354, 259, 165, 165, 345, 267].map((w, i) => <col key={i} style={{ width: w }} />)}
          <col />
        </colgroup>
        <thead>
          <tr>
            <Head $bare />
            <Head />
            <Head><HeadTail>r</HeadTail></Head>
            {heads.map((h) => (
              <Head key={h.t} $on={h.on}>
                <HeadBox $line={!h.on && h.t !== "AIB Task names"}>{h.t}{h.fx && <Fx />}</HeadBox>
              </Head>
            ))}
          </tr>
        </thead>
        <tbody>
          {rows.map((r) => (
            <Row key={r.n} $on={r.n === 4}>
              <Gutter $on={r.n === 4}><i /></Gutter>
              <Num $on={r.n === 4}>
                {r.n}
                {r.n === 4 && <Solid size={14} color="#777"><circle cx="12" cy="3" r="2.400" /><circle cx="12" cy="12" r="2.400" /><circle cx="12" cy="21" r="2.400" /></Solid>}
              </Num>
              <Cell $bare>
                <Clip><Scrolled>{r.first}</Scrolled></Clip>
                <LinkMark width="5" height="8" viewBox="0 0 5 8"><path d="M5 0v8L0 4z" fill="#2f6fe4" /></LinkMark>
              </Cell>
              <Cell><Clip>{r.xibName}</Clip></Cell>
              <Cell><Clip>{r.xibTask}</Clip></Cell>
              <Cell><Clip>{r.mibName}</Clip></Cell>
              <Picked $tone={tone(r.n)} />
              <Cell><Clip>{r.aibName}</Clip></Cell>
              <Cell><Clip>{r.aibTask}</Clip></Cell>
            </Row>
          ))}
        </tbody>
      </Table>
    </Port>
    <BottomBar>
      <Solid size={8} box="0 0 8 8"><path d="M7 0v8L0 4z" /></Solid>
      <Space $grow={496} />
      <ThumbX />
      <Space $grow={566} />
      <Solid size={8} box="0 0 8 8"><path d="M1 0v8l6-4z" /></Solid>
    </BottomBar>
    <Corner />
    <TrackY>
      <Solid size={9} box="0 0 8 8"><path d="M0 7h8L4 0z" /></Solid>
      <ThumbY />
      <Solid size={9} box="0 0 8 8"><path d="M0 1h8L4 8z" /></Solid>
    </TrackY>
  </Sheet>
);

/* ---------- right rail ---------- */

const Rail = styled.aside`
  display: grid;
  grid-auto-rows: 53px;
  align-content: start;
  justify-items: center;
  flex: none;
  width: 58px;
  border-left: 1px solid #dfdfdf;
  color: #4a4a4a;
`;

const RailButton = styled.button`
  display: grid;
  place-items: center;
  width: 40px;
`;

const railIcons: [string, React.ReactNode][] = [
  ["Comments", <path d="M1.500 3h21v15.500H9.500L6.500 21.500 5.500 18.500h-4z" />],
  ["Attachments", <path d="M9 15l6.500-6.500c2.500-2.500-1-5.500-3.500-3L7 10.500c-4 4.500 1.500 8.500 5 5l8-8c5-5-2-9-6-5L4.500 11.500c-6.500 7 1 13.500 6.500 8.500l2-2" />],
  ["Proofs", <path d="M6 2h12M4 5.500h16M1.500 9.500h21v8l-4.500 5H1.500zM22 17.500h-4.500v5" />],
  ["Brandfolder", <><path d="M13 22.500H2v-21h17V9M21 9v9M18.500 15.500L21 18l2.500-2.500" /><path d="M8 7.500h4a2.200 2.200 0 0 1 0 4.500H8zM8 12h4.500a2.300 2.300 0 0 1 0 4.500H8z" strokeWidth="2.400" /></>],
  ["Update requests", <path d="M8 2.500A10 10 0 0 1 21.500 9.500c.5 2 .2 4-.5 6M24 15l-3.500 1.500-1-3.500M16 21.500A10 10 0 0 1 2.500 14.500c-.5-2-.2-4 .5-6M1.500 4L5 4l.5 4M8.500 12l3 3 4.500-5" />],
  ["Publish", <path d="M3 1.500h13l5 5v16H3zM15.500 1.500V7H21M12 18v-7M8.500 13.500L12 10.500l3.500 3" />],
  ["Activity log", <><circle cx="12" cy="12" r="10.500" /><path d="M4.500 12H8l2-3.500 3 7 2.500-4.500 1 1h3" /></>],
  ["Summary", <path d="M11 2h11.500v14.500l-5 5H11M22 16h-4.500v5.500M1.500 5.500H11v17H1.500zM4.500 10H8M4.500 14H8M4.500 18H8" />],
  ["Resources", <><circle cx="6.500" cy="8" r="3.500" /><path d="M1 20c0-4 2-6 6-6h2M13.500 6h9v4h-9zM13.500 15h9v4h-9z" /></>],
  ["Charts", <path d="M1.500 2h21v20h-21zM7 17v-4M10.500 17V7M14 17v-7M17.500 17v-2" />],
  ["Connections", <path d="M1 23l4-4M5 19c-3-3-1-6 2-8l7 7c-3 3-6 4-9 1zM9 13l2.500-2.500M12 16l2.500-2.500M10.500 8l7 6.500c4-2 5.500-6 2.500-9-3.500-3-7-1.500-9.500 2.500zM20 5l3.500-3.500" />],
];

const RightRail = () => (
  <Rail>
    {railIcons.map(([t, p]) => <RailButton key={t} aria-label={t}><Line size={24} w={1.8}>{p}</Line></RailButton>)}
    <RailButton aria-label="Assistant"><Solid size={26}><path d="M9 5c1.500 5.500 3.500 7.500 9 9.500-5.500 2-7.500 4-9 9.500-1.500-5.500-3.500-7.500-9-9.500 5.500-2 7.500-4 9-9.500zM19 .5c.8 3.200 1.800 4.200 5 5-3.200.8-4.200 1.800-5 5-.8-3.200-1.800-4.200-5-5 3.200-.8 4.200-1.800 5-5z" /></Solid></RailButton>
  </Rail>
);

/* ---------- taskbar ---------- */

const Taskbar = styled.footer`
  display: grid;
  grid-template-columns: 1fr auto 1fr;
  align-items: center;
  flex: none;
  height: 47px;
  padding: 0 18px 2px;
  background: #1c1c1c;
  color: #fff;
  font-size: 11px;
  line-height: 16px;
`;

const Weather = styled.button`
  display: flex;
  align-items: center;
  gap: 4px;
  text-align: left;
  white-space: nowrap;
  small { display: block; font-size: 11px; color: #a9a9a9; }
`;

const Apps = styled.div`
  display: flex;
  align-items: center;
`;

const Dock = styled.button<{ $on?: boolean }>`
  display: grid;
  place-items: center;
  position: relative;
  width: 44px;
  height: 40px;
  border-radius: 4px;
  ${(p) => p.$on && css`background: linear-gradient(#2d2d2d, #2d2d2d) center / 38px 40px no-repeat;`}
`;

const Mark = styled.i<{ $on?: boolean }>`
  position: absolute;
  bottom: 0;
  left: 50%;
  width: ${(p) => (p.$on ? 16 : 6)}px;
  height: 3px;
  margin-left: -${(p) => (p.$on ? 8 : 3)}px;
  border-radius: 2px;
  background: ${(p) => (p.$on ? "#4cc2ff" : "#9a9a9a")};
`;

const Badge = styled.b`
  position: absolute;
  right: 4px;
  top: 2px;
  width: 16px;
  height: 16px;
  border-radius: 50%;
  background: #c42b1c;
  font: 400 11px/16px ${ui};
`;

const Search = styled.label`
  display: flex;
  align-items: center;
  gap: 10px;
  width: 220px;
  height: 32px;
  margin: 0 2px 0 3px;
  padding: 0 14px 0 11px;
  border-radius: 16px;
  border: 1px solid #4c4c4c;
  background: #3a3a3a;
  font-size: 13px;
  input { flex: 1; min-width: 0; }
  input::placeholder { color: #cfcfcf; opacity: 1; }
`;

const Clock = styled.div`
  display: flex;
  align-items: center;
  justify-content: flex-end;
  gap: 8px;
  text-align: right;
`;

const Bar = () => (
  <Taskbar>
    <Weather>
      <svg width="28" height="36" viewBox="0 0 28 36" aria-hidden="true">
        <defs><linearGradient id="sun" x1="0" x2="1" y2="1"><stop stopColor="#f9c22e" /><stop offset="1" stopColor="#ee6a12" /></linearGradient></defs>
        <circle cx="13" cy="20" r="10" fill="url(#sun)" />
        <path d="M14 26c-4 0-4-5 0-5 1-4 7-4 8 0 4 0 4 5 0 5z" fill="#b7d4f5" />
        <circle cx="20" cy="10" r="8" fill="#f99ba5" />
        <text x="20" y="14" fontSize="11" textAnchor="middle" fill="#222" fontFamily="Open Sans, sans-serif">1</text>
      </svg>
      <span>38°F<small>Mostly sunny</small></span>
    </Weather>
    <Apps>
      <Dock aria-label="Start">
        <svg width="24" height="24" viewBox="0 0 24 24" aria-hidden="true">
          <defs><linearGradient id="win" x1="0" x2="1" y2="1"><stop stopColor="#8fe3ff" /><stop offset="1" stopColor="#1a9bf5" /></linearGradient></defs>
          <path d="M0 0h11.500v11.500H0zM12.500 0H24v11.500H12.500zM0 12.500h11.500V24H0zM12.500 12.500H24V24H12.500z" fill="url(#win)" />
        </svg>
      </Dock>
      <Search>
        <Line size={16} w={2.2}><circle cx="10.500" cy="10.500" r="8.500" /><path d="M17 17l6 6" /></Line>
        <input aria-label="Search" placeholder="Search" />
        <svg width="28" height="24" viewBox="0 0 28 24" aria-hidden="true">
          <path d="M2 1v22" stroke="#bbb" strokeWidth="2" />
          <path d="M3 2c8-3 12 3 24 0v16c-12 3-16-3-24 0z" fill="#f3f3f3" />
          <path d="M15 4.500c4 1 8 1 12 0M15 8.500c4 1 8 1 12 0M3 12.500c8-3 12 3 24 0M3 16.500c8-3 12 3 24 0" stroke="#d8434e" strokeWidth="2" fill="none" />
          <path d="M3 2c5-2 8-.5 12 .5v9C11 10.500 8 9.500 3 11z" fill="#3553a0" />
          <path d="M5 4h9M5 6.500h9M5 9h9" stroke="#fff" strokeWidth=".9" strokeDasharray="1 1.500" />
        </svg>
      </Search>
      <Dock aria-label="Task view">
        <svg width="24" height="24" viewBox="0 0 24 24" aria-hidden="true"><rect x="0" y="8" width="18" height="15" rx="1" fill="#5b5b5b" /><rect x="6" y="1" width="18" height="16" rx="1" fill="#f2f2f2" /><rect x="6" y="8" width="12" height="9" fill="#bcbcbc" /></svg>
      </Dock>
      <Dock aria-label="Teams">
        <svg width="24" height="26" viewBox="0 0 24 26" aria-hidden="true"><circle cx="10" cy="5" r="4" fill="#6a70e8" /><path d="M6 10h15a2 2 0 0 1 2 2v6a7 7 0 0 1-7 7h-3a7 7 0 0 1-7-7z" fill="#7d84f2" /><path d="M6 10h11v14l-4 1a7 7 0 0 1-7-7z" fill="#9aa0fa" /><rect x="0" y="11" width="11" height="11" rx="2" fill="#4448c0" /><path d="M3 14h5M5.500 14v6" stroke="#fff" strokeWidth="1.500" /></svg>
        <Badge>1</Badge><Mark />
      </Dock>
      <Dock aria-label="Edge" $on>
        <svg width="24" height="24" viewBox="0 0 24 24" aria-hidden="true">
          <defs><linearGradient id="ed" x1="0" x2="1"><stop stopColor="#1e9de0" /><stop offset=".6" stopColor="#2cc3cf" /><stop offset="1" stopColor="#6be35a" /></linearGradient></defs>
          <path d="M0 12A12 12 0 0 1 24 10.500c0 4-3 6.500-6.500 6.500-3 0-4-1.500-3-3 1-1.700.5-5.500-4-5.500C5 8.500 1 11 0 12z" fill="url(#ed)" />
          <path d="M0 12c1-2.500 5-4.500 9.500-4 2.500.3 4 1.500 4.500 3-4-.5-5 2-4 5 1.500 4 6.500 6 12 3A12 12 0 0 1 0 12z" fill="#1272c4" />
          <path d="M9.500 11.500c-4 3.500-2 11 4.500 12.300 3.500 0 6.500-2 8-4.800-5.500 3-10.500 1-12-3-.6-1.700-.5-3.500-.5-4.500z" fill="#0c4d99" />
        </svg>
        <Mark $on />
      </Dock>
      <Dock aria-label="Outlook">
        <svg width="24" height="24" viewBox="0 0 24 24" aria-hidden="true"><path d="M12 0l12 6v15a2 2 0 0 1-2 2H6a3 3 0 0 1-3-3V6z" fill="#1267c9" /><path d="M12 0l12 6-12 10L6 5z" fill="#3aa6f2" /><path d="M24 7v14a2 2 0 0 1-2 2H8z" fill="#49c8f7" /><rect x="0" y="6" width="14" height="13" rx="2" fill="#0c59b5" /><ellipse cx="7" cy="12.500" rx="3" ry="3.500" fill="none" stroke="#fff" strokeWidth="1.700" /></svg>
        <Mark />
      </Dock>
      <Dock aria-label="Files">
        <svg width="24" height="24" viewBox="0 0 24 24" aria-hidden="true"><path d="M0 3a1.500 1.500 0 0 1 1.500-1.500H8L10.500 4H24v8H0z" fill="#dd9a0f" /><rect x="0" y="5.500" width="24" height="17" rx="1.500" fill="#fdca3c" /><path d="M4 23v-5a2 2 0 0 1 2-2h12a2 2 0 0 1 2 2v5z" fill="#1673c5" /><path d="M8 19h8" stroke="#0c4f90" strokeWidth="1.500" /></svg>
      </Dock>
      <Dock aria-label="Discord">
        <svg width="24" height="24" viewBox="0 0 24 24" aria-hidden="true"><circle cx="12" cy="12" r="12" fill="#5865f2" /><path d="M7 7.500c3-1.500 7-1.500 10 0 1.500 2.500 2.300 5 2 8-1.200 1-2.500 1.500-3.500 1.700l-1-1.500c-1.500.4-3.500.4-5 0l-1 1.500c-1-.2-2.300-.7-3.500-1.700-.3-3 .5-5.500 2-8z" fill="#fff" /><circle cx="9.300" cy="12.300" r="1.500" fill="#5865f2" /><circle cx="14.700" cy="12.300" r="1.500" fill="#5865f2" /></svg>
      </Dock>
      <Dock aria-label="Glitter">
        <svg width="22" height="22" viewBox="0 0 22 22" aria-hidden="true"><rect x="1" y="1" width="20" height="20" rx="4" fill="#2c0a66" /><path d="M14.500 7.500A4.500 4.500 0 1 0 15 12H11.500M14.500 11v6" fill="none" stroke="#fff" strokeWidth="2.400" /><path d="M4 4l1 1M17 4l-1 2M4 17l2-1M18 17l-1-1M18 9h1M3 10h1" stroke="#d58bff" strokeWidth="1.200" /></svg>
        <Mark />
      </Dock>
      <Dock aria-label="Forms">
        <svg width="24" height="24" viewBox="0 0 24 24" aria-hidden="true"><rect x="5" y="1" width="19" height="22" rx="1.500" fill="#1ea5a8" /><path d="M14 1h8.500A1.500 1.500 0 0 1 24 2.500V12H14z" fill="#3fd0d0" /><circle cx="19" cy="6.500" r="2.200" fill="#0b6f73" /><rect x="16" y="15" width="6" height="6" fill="#0b7f83" /><rect x="0" y="6" width="12" height="12" rx="1.500" fill="#08666b" /><path d="M4.500 15.500V9h4M4.500 12h3.500" stroke="#fff" strokeWidth="1.500" fill="none" /></svg>
      </Dock>
    </Apps>
    <Clock>
      <time>7:35 AM<br />2/16/2026</time>
      <Solid size={18}>
        <path d="M10 3c4 0 5 1 5 1v6h4v6l3 3v1.500H0V19l3-3v-6a7 7 0 0 1 7-7zM8 21.500h6c-.5 2-5.500 2-6 0z" />
        <path d="M8 9.500h5L8 15.500h5" stroke="#1c1c1c" strokeWidth="2" fill="none" /><path d="M17 2h5l-5 6h5" stroke="#fff" strokeWidth="1.800" fill="none" />
      </Solid>
    </Clock>
  </Taskbar>
);

export default function App() {
  return (
    <Screen>
      <Global />
      <Browser />
      <Workspace>
        <SideNav />
        <Content>
          <SheetHeader />
          <SheetToolbar />
          <Work>
            <Grid />
            <RightRail />
          </Work>
        </Content>
      </Workspace>
      <Bar />
    </Screen>
  );
}
